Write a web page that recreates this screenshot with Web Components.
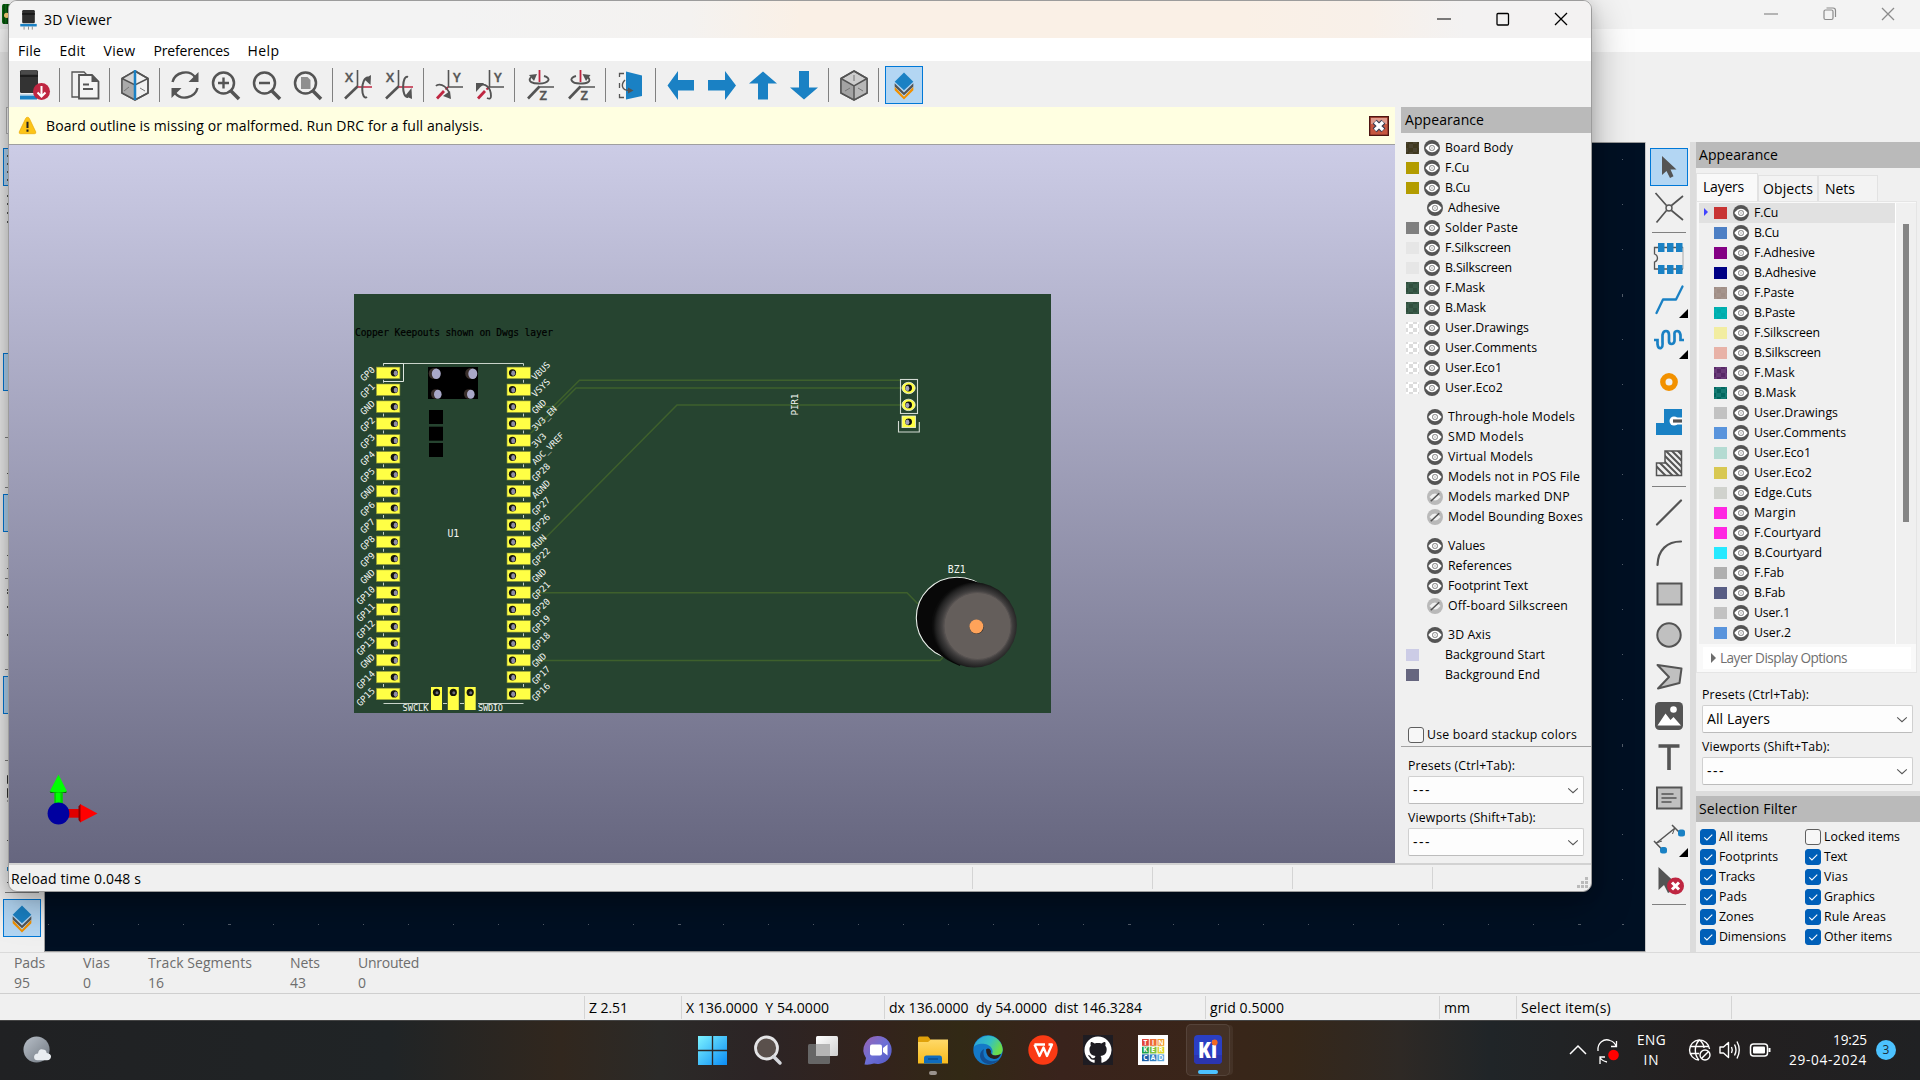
<!DOCTYPE html>
<html lang="en">
<head>
<meta charset="utf-8">
<title>3D Viewer</title>
<style>
html,body{margin:0;padding:0;width:1920px;height:1080px;overflow:hidden;background:#f0f0f0}
body{font-family:"Open Sans","Noto Sans",sans-serif;font-size:14px;color:#000;display:flex;flex-direction:column}
</style>
</head>
<body>
<desk-top></desk-top>
<script>
const G='#545454', B='#1a81c4', R='#bf2641';
const def=(tag,css,html,after)=>customElements.define(tag,class extends HTMLElement{
  connectedCallback(){
    if(this.shadowRoot)return;
    const r=this.attachShadow({mode:'open'});
    r.innerHTML='<style>*{box-sizing:border-box}'+css+'</style>'+html(this);
    if(after)after(this,r);
  }});
const a=(e,n,d='')=>e.getAttribute(n)??d;

/* Text run; w sets the advance width through letter spacing */
def('ui-text',':host{display:block;white-space:pre;flex:none;line-height:20px}span{display:inline-block}',
  ()=>'<span><slot></slot></span>',(e,r)=>{
  const w=+a(e,'w',0); if(!w)return;
  const s=r.querySelector('span'),n=e.textContent.length,cur=s.getBoundingClientRect().width;
  if(n>1&&cur)s.style.letterSpacing=((w-cur)/n).toFixed(3)+'px';
});

const cubeBody=(fill)=>`<path d="M15 1 28 8.500V23L15 30 2 23V8.500Z" fill="${fill}" stroke="${G}" stroke-width="1.500" stroke-linejoin="round"/>`;
const mag=`<circle cx="12.500" cy="13" r="10.500" fill="none" stroke="${G}" stroke-width="2.500"/><path d="M20 21 28 29" stroke="${G}" stroke-width="3.500"/>`;
const letter=(t,x,y)=>`<text x="${x}" y="${y}" font-size="13" font-weight="600" fill="${G}" stroke="${G}" stroke-width=".4" font-family="Open Sans,sans-serif">${t}</text>`;
const layersIc=`<path d="M5 17 15 27.500 25 17V20.500L15 30.500 5 20.500Z" fill="#f29100"/><path d="M5 13 15 23 25 13V16.500L15 26 5 16.500Z" fill="#545454"/><path d="M15 1.500 25 11.500 15 20.500 5 11.500Z" fill="${B}"/>`;
const I={
load:`<rect x="0" y="0" width="18" height="23" rx="1.500" fill="#333"/><path d="M0 5H18V7H0Z" fill="#1d1d1d"/><rect x="1" y="0" width="16" height="4.500" fill="#4a4a4a"/><rect x="0" y="24.500" width="17" height="2" fill="#8fbfe0"/><rect x="0" y="26" width="17" height="3.500" fill="${B}"/><circle cx="21.500" cy="21.500" r="8.500" fill="${R}"/><path d="M21.500 16V26M17.500 22.500 21.500 26.500 25.500 22.500" fill="none" stroke="#fff" stroke-width="2"/>`,
copy:`<path d="M9 27H2V2H14L17 5" fill="none" stroke="${G}" stroke-width="1.300"/><path d="M9 5H22L28.500 11.500V28.500H9Z" fill="#f4f4f4" stroke="${G}" stroke-width="1.800"/><path d="M21.500 5V12H28.500Z" fill="${G}"/><path d="M13 14.500H19M13 19H23" stroke="${G}" stroke-width="1.800"/>`,
raytrace:cubeBody('#f2f2f2')+`<path d="M2 8.500 15 15V30L2 23Z" fill="#aaa"/><path d="M15 1 2 8.500 15 15Z" fill="#d5d5d5"/><path d="M2 8.500 15 15 28 8.500M15 1 28 8.500V23L15 30 2 23V8.500Z" fill="none" stroke="${G}" stroke-width="1.500"/><path d="M15 0V30" stroke="${B}" stroke-width="2.500"/><path d="M4 21 9 17M20 18 25 21" stroke="#777" stroke-width="1"/>`,
refresh:`<path d="M2.500 12C5 2 19-1 25 7M27.500 18C25 28 11 31 5 23" fill="none" stroke="${G}" stroke-width="2.400"/><path d="M28.500 2V12H18.500ZM1.500 28V18H11.500Z" fill="${G}"/>`,
zin:mag+`<path d="M7 13H18M12.500 7.500V18.500" stroke="${G}" stroke-width="2.400"/>`,
zout:mag+`<path d="M7 13H18" stroke="${G}" stroke-width="2.400"/>`,
zfit:mag+`<path d="M8 7H14.500L17.500 10V19H8Z" fill="#8f8f8f"/>`,
x1:letter('X',2,12)+`<path d="M14.500 0V17" stroke="${G}" stroke-width="1.600"/><path d="M14 17H29" stroke="${R}" stroke-width="1.600"/><path d="M14.500 16.500 2 28.500" stroke="${G}" stroke-width="2.600"/><path d="M24 27C18 31 17 8 25 7.500" fill="none" stroke="${G}" stroke-width="2"/><path d="M21 9 28 5 27.500 15Z" fill="${G}"/>`,
x2:letter('X',2,12)+`<path d="M14.500 0V17" stroke="${G}" stroke-width="1.600"/><path d="M14 17H29" stroke="${R}" stroke-width="1.600"/><path d="M14.500 16.500 2 28.500" stroke="${G}" stroke-width="2.600"/><path d="M24 7C18 4 17 28 24 27" fill="none" stroke="${G}" stroke-width="2"/><path d="M21 26 28 29 27.500 18Z" fill="${G}"/>`,
y1:letter('Y',19,12)+`<path d="M14.500 0V17H29" fill="none" stroke="${G}" stroke-width="1.600"/><path d="M10 21 3 28.500" stroke="${R}" stroke-width="2.800"/><path d="M14 17 11.500 19.500" stroke="${R}" stroke-width="2"/><path d="M2 16C5 12 17 17 15 28" fill="none" stroke="${G}" stroke-width="1.800"/><path d="M9 26 17 29 16 21Z" fill="${G}"/>`,
y2:letter('Y',19,12)+`<path d="M14.500 0V17H29" fill="none" stroke="${G}" stroke-width="1.600"/><path d="M10 21 3 28.500" stroke="${R}" stroke-width="2.800"/><path d="M14 17 11.500 19.500" stroke="${R}" stroke-width="2"/><path d="M5 16C10 12 16 18 16 26Q16 30 12 28" fill="none" stroke="${G}" stroke-width="1.800"/><path d="M1 22 1 13 9 13Z" fill="${G}"/>`,
z1:letter('Z',14.500,29.500)+`<path d="M14.500 0V12" stroke="${R}" stroke-width="1.800"/><path d="M14 17H29" stroke="${G}" stroke-width="1.700"/><path d="M14.500 16.500 3 28.500" stroke="${G}" stroke-width="2.600"/><path d="M6 7C2 12 8 13.500 14 13.500 24 13.500 27 8 19 6" fill="none" stroke="${G}" stroke-width="1.900"/><path d="M4 5 12 4 9 11Z" fill="${G}"/>`,
z2:letter('Z',14.500,29.500)+`<path d="M14.500 0V12" stroke="${R}" stroke-width="1.800"/><path d="M14 17H29" stroke="${G}" stroke-width="1.700"/><path d="M14.500 16.500 3 28.500" stroke="${G}" stroke-width="2.600"/><path d="M10 6C2 8 5 13.500 14 13.500 21 13.500 26 12 22 7" fill="none" stroke="${G}" stroke-width="1.900"/><path d="M24.500 5 16.500 4 20 11Z" fill="${G}"/>`,
flip:`<path d="M10 1.500 26 5.500V26L10 29.500Z" fill="${B}"/><path d="M8 3.500H3.500V7M3.500 24V27.500H8M3.500 13V18" fill="none" stroke="${G}" stroke-width="1.300"/><path d="M9 10C5 14 5 20 13 20.500" fill="none" stroke="${G}" stroke-width="1.400"/><path d="M12 17.500 17.500 20.500 12 23.500Z" fill="${G}"/>`,
left:`<path d="M1.500 15.500 12 1V10H28V20.500H12V30Z" fill="${B}"/>`,
right:`<path d="M29 15.500 18 1V10H1V20.500H18V30Z" fill="${B}"/>`,
up:`<path d="M15 1.500 29 13.500H20V29.500H10V13.500H1Z" fill="${B}"/>`,
down:`<path d="M15 29.500 29 17.500H20V1H10V17.500H1Z" fill="${B}"/>`,
cube:cubeBody('#cdcdcd')+`<path d="M2 8.500 15 16V30L2 23Z" fill="#a3a3a3"/><path d="M15 16 28 8.500V23L15 30Z" fill="#b8b8b8"/><path d="M2 8.500 15 16 28 8.500M15 16V30M15 1 28 8.500V23L15 30 2 23V8.500Z" fill="none" stroke="${G}" stroke-width="1.500"/><path d="M15 5V11M6 21 11 18M19 18 24 21" stroke="#777" stroke-width="1"/>`,
layers:layersIc,
app3d:`<rect x="5" y="0" width="20" height="21" rx="2" fill="#2e2e2e"/><rect x="5" y="5" width="20" height="2.500" fill="#151515"/><rect x="2" y="22" width="26" height="4" fill="${B}"/><path d="M8 26V31M15 26V31M21 26V31" stroke="#888" stroke-width="1.500"/>`,
warn:`<path d="M15 2Q17 2 18 4L28 25Q29 28 26 28H4Q1 28 2 25L12 4Q13 2 15 2Z" fill="#fcc419" stroke="#e9a400" stroke-width="1"/><path d="M15 9V19M15 21.500V25" stroke="#222" stroke-width="3.200"/>`,
cursor:`<path d="M9 5V24L13.500 20 17 27 20.500 25.300 17.500 18.500H23.500Z" fill="${G}" transform="translate(-1 -1)"/>`,
ratsnest:`<path d="M1.500 0 12.500 12.500M29 3 17.500 12.500M2.500 29.500 12.500 17.500M29 27 17.500 17.500" stroke="${G}" stroke-width="1.700"/><circle cx="15" cy="15" r="3" fill="none" stroke="${G}" stroke-width="1.400"/>`,
fp:`<path d="M29 4.500H.5V11Q3.500 12 3.500 15T.5 19V26H29" fill="none" stroke="${G}" stroke-width="1.300"/><path d="M29 4V26" stroke="#aaa"/><path d="M4 0H10.500V9H4ZM13 0H19.500V9H13ZM22 0H28.500V9H22ZM4 22H10.500V31H4ZM13 22H19.500V31H13ZM22 22H28.500V31H22Z" fill="${B}"/>`,
track:`<path d="M2.500 28 9 14.500H22L28.500 1.500" fill="none" stroke="${B}" stroke-width="2.300" stroke-linejoin="round" stroke-linecap="round"/>`,
tune:`<path d="M0 14H3.500V18Q4 23 7 22 9 21 8.500 16V9Q9 5 12 5T15 9V15Q15 18 17.500 18T20.500 15V9Q20 5 23 5T26.500 9V14H30" fill="none" stroke="${B}" stroke-width="2.700"/>`,
via:`<circle cx="15" cy="15" r="6.200" fill="none" stroke="#f29100" stroke-width="5.400"/>`,
zone:`<path d="M10 2H28V28H2V16H10Z" fill="${B}"/><path d="M28 14H20" stroke="#fff" stroke-width="7"/><circle cx="20" cy="14" r="4.500" fill="#fff"/><path d="M19 14H28" stroke="${G}" stroke-width="3.200"/>`,
rule:`<defs><clipPath id="c"><path d="M11 3H27V27H3V15H11Z"/></clipPath></defs><g clip-path="url(#c)"><path d="M-2 14 14 30M3 12 20 29M6 9 26 29M9 6 30 27M11 2 30 21M17 2 30 15M23 2 30 9" stroke="${G}" stroke-width="2"/></g><path d="M11 3H27.500V27.500H2.500V15H11Z" fill="none" stroke="${G}" stroke-width="1.500"/>`,
line:`<path d="M3 27.500 27 3.500" stroke="${G}" stroke-width="2.200" stroke-linecap="round"/>`,
arc:`<path d="M3.500 27C4 12 13 3.500 27 3.500" fill="none" stroke="${G}" stroke-width="2.200" stroke-linecap="round"/>`,
rect:`<rect x="3.500" y="4.500" width="24" height="21" fill="#c0c0c0" stroke="${G}" stroke-width="2"/>`,
circ:`<circle cx="15" cy="15" r="11.700" fill="#c0c0c0" stroke="${G}" stroke-width="2"/>`,
poly:`<path d="M3.500 4 27.500 7.500 25.500 22 4 27.500 15 16Z" fill="#c0c0c0" stroke="${G}" stroke-width="2" stroke-linejoin="round"/>`,
image:`<rect x="1" y="1" width="28" height="28" rx="4.500" fill="${G}"/><circle cx="19.500" cy="8.500" r="3.300" fill="#fff"/><path d="M3.500 24.500 11.500 12.500 16.500 19 19.500 16 27 24.500Z" fill="#fff"/>`,
text:`<path d="M4.500 4H25.500M15 4V28" stroke="${G}" stroke-width="3.600"/>`,
tbox:`<rect x="3" y="4.500" width="24.500" height="21" fill="#c0c0c0" stroke="${G}" stroke-width="2"/><path d="M8 11H19M8 15H22M8 19H17" stroke="${G}" stroke-width="1.500" stroke-linecap="round"/>`,
dim:`<path d="M2.500 19 20.500 4.500M0 17 9 26.500M18 1 27 10" stroke="${G}" stroke-width="1.500"/><path d="M2.500 19 8 17M20.500 4.500 18.500 10" stroke="${G}"/><rect x="6" y="23" width="7" height="6.500" rx="2.500" fill="${B}"/><rect x="24" y="5.500" width="7" height="7" rx="2.500" fill="${B}"/>`,
del:`<path d="M4.500 1V24L10 19 14 27 18 25 14.500 17.500 20 15.500Z" fill="${G}"/><circle cx="21.500" cy="20" r="8.500" fill="${R}"/><path d="M18 16.500 25 23.500M25 16.500 18 23.500" stroke="#fff" stroke-width="3"/>`,
start:`<defs><linearGradient id="g" x1="0" y1="0" x2="1" y2="1"><stop offset="0" stop-color="#7df3ff"/><stop offset="1" stop-color="#0a8cf5"/></linearGradient></defs><path d="M0 0H14.300V14.300H0ZM15.700 0H30V14.300H15.700ZM0 15.700H14.300V30H0ZM15.700 15.700H30V30H15.700Z" fill="url(#g)"/>`,
search:`<circle cx="13.500" cy="13" r="11" fill="#5a504c" stroke="#e4e4e6" stroke-width="2.800"/><path d="M20.500 21.500 27 28" stroke="#d5d7dc" stroke-width="3.500" stroke-linecap="round"/>`,
tasks:`<defs><linearGradient id="g" x1="0" y1="0" x2="1" y2="1"><stop offset="0" stop-color="#fff"/><stop offset="1" stop-color="#cfcfcf"/></linearGradient></defs><rect x="8" y="1" width="22" height="20" rx="1.500" fill="url(#g)"/><rect x="0" y="9" width="22" height="20" rx="1.500" fill="#666"/><path d="M8 9H22V21H8Z" fill="#b5b5b5"/>`,
chat:`<defs><linearGradient id="g" x1="0" y1="0" x2="1" y2="1"><stop offset="0" stop-color="#9b62b0"/><stop offset=".5" stop-color="#6d6fd6"/><stop offset="1" stop-color="#5157c4"/></linearGradient></defs><path d="M15 1A14 14 0 1 1 11 28.500Q7 30 1.500 29.500L3 23A14 14 0 0 1 15 1Z" fill="url(#g)"/><rect x="7" y="9.500" width="12" height="11" rx="2" fill="#fff"/><path d="M20 13 24.500 9.500V20.500L20 17Z" fill="#fff"/>`,
folder:`<defs><linearGradient id="g" x1="0" y1="0" x2="0" y2="1"><stop offset="0" stop-color="#ffd969"/><stop offset="1" stop-color="#f8bb1c"/></linearGradient></defs><path d="M0 3Q0 1.500 1.500 1.500H10L13 5V9H0Z" fill="#e0a10a"/><path d="M0 7H10L13 4.500H30V28.500H0Z" fill="url(#g)"/><path d="M6 28.500V23Q6 20.500 8.500 20.500H22Q24 20.500 24 23V28.500Z" fill="#0f6cbd"/><path d="M10 24H20" stroke="#0a4d8c" stroke-width="1.500"/>`,
edge:`<defs><linearGradient id="g" x1="0" y1="0" x2="1" y2=".4"><stop offset="0" stop-color="#2a9fe0"/><stop offset=".6" stop-color="#35c1c1"/><stop offset="1" stop-color="#6bdc4a"/></linearGradient></defs><circle cx="15" cy="15" r="14.700" fill="#1479c8"/><path d="M.8 12A14.700 14.700 0 0 1 29.700 14C30 20 24 22 19 19.500 21 15 18 10 12 9 7 8 2 10 .8 12Z" fill="url(#g)"/><path d="M11 14C8 24 17 29 26 24.500 21 31.500 8 30.500 7 21 7 17 9 15 11 14Z" fill="#124f94"/><path d="M13 14.500Q16 12 18 16 17 18 19 19.500 22 21.500 28 19 26 24 21 24 13 23 13 14.500Z" fill="#2b1f1c"/>`,
wps:`<circle cx="15" cy="15" r="14.700" fill="#fa3a14"/><path d="M6.500 9.500H17M6.500 9.500 11.500 21 15.500 12.500 19 21 24 9.500H20.500" fill="none" stroke="#fff" stroke-width="2.300" stroke-linejoin="round"/>`,
github:`<rect x="0" y="0" width="30" height="30" fill="#1e1c22"/><g transform="translate(1.500 1.500) scale(1.690)"><path fill="#fff" d="M8 0C3.580 0 0 3.580 0 8c0 3.540 2.290 6.530 5.470 7.590.4.070.55-.17.55-.38 0-.19-.01-.82-.01-1.490-2.010.37-2.530-.49-2.690-.94-.09-.23-.48-.94-.82-1.130-.28-.15-.68-.52-.01-.53.63-.01 1.080.58 1.230.82.72 1.210 1.870.87 2.330.66.07-.52.28-.87.51-1.070-1.780-.2-3.640-.89-3.640-3.950 0-.87.31-1.590.82-2.150-.08-.2-.36-1.020.08-2.120 0 0 .67-.21 2.200.82.64-.18 1.320-.27 2-.27s1.360.09 2 .27c1.530-1.040 2.200-.82 2.200-.82.44 1.100.16 1.920.08 2.120.51.56.82 1.270.82 2.150 0 3.070-1.870 3.750-3.650 3.950.29.25.54.73.54 1.480 0 1.070-.01 1.930-.01 2.200 0 .21.150.46.550.38A8.010 8.010 0 0 0 16 8c0-4.420-3.580-8-8-8Z"/></g>`,
tinker:`<rect width="30" height="30" fill="#fff"/>`+[['T','#e2453b'],['I','#ee6c35'],['N','#f39a27'],['K','#1ea24b'],['E','#7dc242'],['R','#dcd32b'],['C','#1b5fa8'],['A','#2f7fc4'],['D','#5aa7dd']].map(([t,c],i)=>{const x=4+(i%3)*7.700,y=4+(i/3|0)*7.700;return `<rect x="${x}" y="${y}" width="6.800" height="6.800" fill="${c}"/><text x="${x+3.400}" y="${y+5.700}" font-size="6.500" font-weight="700" text-anchor="middle" fill="#fff" font-family="Open Sans">${t}</text>`}).join(''),
kicad:`<rect x="1" y="0" width="28" height="29" rx="4" fill="#2a3fc4"/><path d="M1 20H29V25Q29 29 25 29H5Q1 29 1 25Z" fill="#2b35b0"/><text x="14.500" y="23" font-size="23" font-weight="800" text-anchor="middle" textLength="19" lengthAdjust="spacingAndGlyphs" fill="#fff" font-family="Open Sans">Ki</text><circle cx="21.700" cy="7.500" r="2.900" fill="#f26822"/>`,
weather:`<defs><linearGradient id="g" x1="0" y1="0" x2="1" y2="1"><stop offset="0" stop-color="#b9c0c9"/><stop offset="1" stop-color="#6f7780"/></linearGradient></defs><circle cx="14" cy="14" r="13.500" fill="url(#g)"/><path d="M15 25Q11 25 11.500 21 12 18 15.500 18 16.500 13 20.500 14 24 14 24.500 17.500 29 18 29 21.500 28.500 25 25 25Z" fill="#e9edf1"/>`,
chev:`<path d="M7 19 15 11 23 19" fill="none" stroke="#fff" stroke-width="1.500"/>`,
sync:`<path d="M5 16C4 8 11 3 17 5.500 20 6.500 22 8 23 11M23.500 6V11.500H18M7 29V22H12M7 22.500Q9 26 14 27" fill="none" stroke="#fff" stroke-width="1.300"/><circle cx="20.500" cy="20" r="5.300" fill="#f00"/>`,
globe:`<g fill="none" stroke="#fff" stroke-width="1.400"><path d="M14 25A10 10 0 1 1 24.500 14M5.500 11.500H23.500M5.500 18.500H14M14 25C9 20 9 10 14.500 5 18 8 19 11 19 13"/><circle cx="20" cy="20" r="5"/><path d="M16.500 23.500 23.500 16.500"/></g>`,
vol:`<g fill="none" stroke="#fff" stroke-width="1.400"><path d="M5 12H8.500L13.500 7.500V22.500L8.500 18H5Z" stroke-linejoin="round"/><path d="M16.500 12Q18 15 16.500 18M19.500 9.500Q22.500 15 19.500 20.500M22 6.500Q26.500 15 22 23.500"/></g>`,
bat:`<rect x="5.500" y="9" width="17" height="12" rx="3" fill="none" stroke="#fff" stroke-width="1.500"/><rect x="8" y="11.500" width="12" height="7" fill="#fff" rx="1"/><path d="M24.500 13V17" stroke="#fff" stroke-width="2"/>`,
min:`<path d="M8 15H22" stroke="currentColor" stroke-width="1.200"/>`,
max:`<rect x="9" y="9.500" width="11.500" height="11.500" rx="1" fill="none" stroke="currentColor" stroke-width="1.300"/>`,
restore:`<rect x="9" y="11" width="9" height="9.500" rx="1.500" fill="none" stroke="currentColor" stroke-width="1.200"/><path d="M11.500 9H18Q20.500 9 20.500 11.500V18" fill="none" stroke="currentColor" stroke-width="1.200"/>`,
close:`<path d="M9 9 21 21M21 9 9 21" stroke="currentColor" stroke-width="1.300"/>`,
eye:`<circle cx="15" cy="15" r="15" fill="#545454"/><path d="M2.500 15Q8 7 15 7T27.500 15Q22 23 15 23T2.500 15Z" fill="#fff"/><rect x="10.600" y="10.600" width="8.800" height="8.800" rx="3" fill="#fff" stroke="#777" stroke-width="1.800"/><circle cx="15" cy="15" r="1.300" fill="#999"/>`,
eyeoff:`<circle cx="15" cy="15" r="15" fill="#b9b9b9"/><path d="M4.500 15Q10 8.500 15 8.500T25.500 15Q20 21.500 15 21.500T4.500 15Z" fill="#f0f0f0"/><path d="M7 23 23 8" stroke="#545454" stroke-width="3"/>`,
drop:`<path d="M6 12 15 20 24 12" fill="none" stroke="#555" stroke-width="2"/>`,
check:`<path d="M8 15.500 13 20.500 23 10.500" fill="none" stroke="#fff" stroke-width="2"/>`,
x95:`<rect x="1" y="1" width="28" height="28" fill="#c6563f" stroke="#4d1512" stroke-width="2"/><rect x="3" y="3" width="24" height="9" fill="#df9a8c"/><path d="M8.500 8.500 21.500 21.500M21.500 8.500 8.500 21.500" stroke="#333c52" stroke-width="8.500"/><path d="M9 9 21 21M21 9 9 21" stroke="#fff" stroke-width="5"/>`,
pcb:`<rect width="30" height="30" rx="3" fill="#0b6e13"/><path d="M3 0V30M8 0V30" stroke="#063f0a" stroke-width="2"/><circle cx="7" cy="17" r="4" fill="#ffd27a"/>`
};
def('ui-icon',':host{display:block;flex:none}svg{display:block;overflow:visible}',e=>{const s=a(e,'s','30');return `<svg width="${s}" height="${s}" viewBox="0 0 30 30">${I[a(e,'n')]}</svg>`});

/* Toolbar pieces */
def('tool-button',':host{display:flex;flex:none;align-items:center;justify-content:center;position:relative;width:41px;height:38px}:host([v]){width:38px;height:var(--h,41px)}.on{width:38px;height:38px;background:#b3d6f3;border:1px solid #0078d7;display:flex;align-items:center;justify-content:center}.tri{position:absolute;right:0;bottom:2px;border-left:9px solid transparent;border-bottom:9px solid #000}',
 e=>{const ic=`<ui-icon n="${a(e,'n')}" s="${a(e,'s','30')}"></ui-icon>`;return (e.hasAttribute('on')?`<div class="on">${ic}</div>`:ic)+(e.hasAttribute('tri')?'<i class="tri"></i>':'')});
def('tool-sep',':host{display:block;flex:none;width:9px;height:34px;padding-left:4px}:host([v]){width:34px;height:8px;padding:3px 0 0}i{display:block;width:1px;height:34px;background:#808080}:host([v]) i{width:34px;height:1px}',()=>'<i></i>');

/* Form pieces */
def('panel-header',':host{display:flex;align-items:center;height:26px;flex:none;background:#bababa;padding:0 0 1px var(--pl,4px);font-size:14px}',e=>`<ui-text w="${a(e,'w')}">${e.textContent}</ui-text>`);
def('combo-box',':host{display:flex;flex:none;align-items:center;justify-content:space-between;height:28px;background:#fdfdfd;border:1px solid #d0d0d0;border-bottom-color:#bcbcbc;border-radius:2px;padding:0 2px 0 4px;font-size:14px}',()=>'<slot></slot><ui-icon n="drop" s="16"></ui-icon>');
def('check-box',':host{display:flex;align-items:center;height:20px;gap:3px;font-size:12.300px}i{display:block;width:16px;height:16px;border-radius:3px;border:1px solid #5f5f5f;background:#f7f7f7;flex:none}:host([c]) i{background:#005fb8;border-color:#005fb8}ui-icon{margin:-1px}',
 e=>`<i>${e.hasAttribute('c')?'<ui-icon n="check" s="16"></ui-icon>':''}</i><ui-text w="${a(e,'w')}">${e.textContent}</ui-text>`);
def('layer-row',':host{display:flex;align-items:center;height:20px;flex:none;padding-left:5px;font-size:12.300px}:host([sel]){background:#e1e1e1}.sw{width:13px;height:12px;flex:none;margin-right:var(--sg,5px)}ui-icon,.no{width:16px;flex:none}ui-text{margin-left:5px}.ind{width:3px}.ar{width:var(--ar,0px);height:8px;position:relative}:host([sel]) .ar::before{content:"";position:absolute;left:0;top:-1px;border-left:4px solid #4143ff;border-top:4px solid transparent;border-bottom:4px solid transparent}',
 e=>{const c=a(e,'c'),c2=a(e,'c2'),eye=a(e,'eye','eye');
 const bg=c2?`background:conic-gradient(${c} 25%,${c2} 0 50%,${c} 0 75%,${c2} 0) -2px -2px/9px 8px`:`background:${c||'transparent'}`;
 return `<i class="ar"></i><i class="sw" style="${bg}"></i>${c?'':'<i class="ind"></i>'}${eye=='none'?'<i class="no"></i>':`<ui-icon n="${eye}" s="16"></ui-icon>`}<ui-text w="${a(e,'w')}">${e.textContent}</ui-text>`});
const row=(t,w,c,c2,eye,x='')=>`<layer-row w="${w}" ${c?`c="${c}"`:''} ${c2?`c2="${c2}"`:''} ${eye?`eye="${eye}"`:''} ${x}>${t}</layer-row>`;

/* Rendered board */
const P=16.9, padY=i=>372.8+i*P;
const LL=['GP0','GP1','GND','GP2','GP3','GP4','GP5','GND','GP6','GP7','GP8','GP9','GND','GP10','GP11','GP12','GP13','GND','GP14','GP15'];
const RL=['VBUS','VSYS','GND','3V3_EN','3V3','ADC_VREF','GP28','AGND','GP27','GP26','RUN','GP22','GND','GP21','GP20','GP19','GP18','GND','GP17','GP16'];
const mono='font-family="DejaVu Sans Mono" fill="#f2f5f0"';
const hole=(x,y,d)=>`<circle cx="${x}" cy="${y}" r="3.600" fill="#15140c"/><ellipse cx="${x+d}" cy="${y+.4}" rx="2" ry="2.700" fill="#8f8da6"/>`;
def('board-view',':host{display:block;flex:1;min-height:0;background:linear-gradient(#cccce6,#66667f)}svg{display:block}',()=>{
 let s='';
 s+='<rect x="354" y="294" width="697" height="419" fill="#264430"/>';
 s+='<g fill="none" stroke="#3e602c" stroke-width="1.500"><path d="M530 406.700H553L579.500 380.300H900M530 434 576 388H905M530 553.500 677 405H905M530 592.700H907L918 604M530 660.400H940L948 652"/></g>';
 s+='<g fill="none" stroke="#c9d3c9" stroke-width="1"><path d="M383.500 366V363.500H523.500V366M383.500 372V690M523.500 372V690M383.500 703.500H429M443 703.500H447M460 703.500H464M478 703.500H523.500"/></g>';
 for(let i=0;i<20;i++){const y=padY(i);
  s+=`<rect x="374.500" y="${y-7}" width="28" height="14" fill="#264430"/><rect x="505" y="${y-7}" width="27" height="14" fill="#264430"/>`;
 }
 s+='<path d="M383.500 363.500H403.500V381.500H383.500" fill="none" stroke="#dfe6df"/>';
 for(let i=0;i<20;i++){const y=padY(i);
  s+=`<rect x="376.400" y="${y-5.700}" width="23.500" height="11.500" fill="#ffff45" stroke="#8c9436" stroke-width=".6"/><rect x="507" y="${y-5.700}" width="23.500" height="11.500" fill="#ffff45" stroke="#8c9436" stroke-width=".6"/>`+hole(394.3,y,1.4)+hole(512.5,y,.7);
  s+=`<text transform="translate(375.500 ${y-2.500}) rotate(-45)" text-anchor="end" font-size="9" ${mono}>${LL[i]}</text>`;
  s+=`<text transform="translate(535.500 ${y+8}) rotate(-45)" font-size="${RL[i].length>5?8.600:9}" ${mono}>${RL[i]}</text>`;
 }
 s+='<rect x="428" y="367" width="50" height="32" fill="#000"/>';
 [[435,373.5,5.5],[471.500,373.5,5.5],[436.500,394,4.800],[469.500,394,4.800]].forEach(([x,y,r])=>s+=`<circle cx="${x-.800}" cy="${y}" r="${r}" fill="#3a2f2b"/><ellipse cx="${x+1.300}" cy="${y+.3}" rx="${r-1}" ry="${r-.3}" fill="#a9a8c8"/>`);
 [410,426.7,443].forEach(y=>s+=`<rect x="429" y="${y}" width="14" height="14" fill="#000"/>`);
 [431,447.800,464.700].forEach(x=>s+=`<rect x="${x}" y="687" width="11" height="23" fill="#ffff45"/><circle cx="${x+5.5}" cy="692.400" r="3.600" fill="#15140c"/><circle cx="${x+6}" cy="692.800" r="1.500" fill="#6b6b7a"/>`);
 s+=`<text x="355" y="335.500" font-size="9.600" font-family="DejaVu Sans Mono" textLength="198" fill="#000" stroke="#000" stroke-width=".15">Copper Keepouts shown on Dwgs layer</text>`;
 s+=`<text x="453.300" y="536.500" font-size="9.800" text-anchor="middle" ${mono}>U1</text><text x="402.500" y="711" font-size="8.600" textLength="26" ${mono}>SWCLK</text><text x="478" y="711" font-size="8.600" textLength="25" ${mono}>SWDIO</text>`;
 s+=`<text transform="translate(798 415.500) rotate(-90)" font-size="9.500" textLength="22" ${mono}>PIR1</text><text x="956.700" y="572.500" font-size="9.800" text-anchor="middle" ${mono}>BZ1</text>`;
 s+='<g fill="none" stroke="#d3dbd3" stroke-width="1.100"><rect x="900.500" y="379.500" width="17" height="34"/><path d="M898.500 421V432H919.300V422"/></g>';
 [388,404.9].forEach(y=>s+=`<ellipse cx="908.600" cy="${y}" rx="6.600" ry="5.700" fill="#ffff45" stroke="#eef0dc" stroke-width=".8"/>`);
 s+='<rect x="902" y="416" width="13.500" height="11.600" fill="#ffff45" stroke="#eef0dc" stroke-width=".8"/>';
 [388,404.9,421.8].forEach(y=>s+=`<circle cx="908.600" cy="${y}" r="3.400" fill="#0d0d10"/><ellipse cx="907.400" cy="${y+.4}" rx="2" ry="2.600" fill="#a3a2ba"/>`);
 s+=`<defs><radialGradient id="cap" cx="977" cy="626" r="44" gradientUnits="userSpaceOnUse"><stop offset=".72" stop-color="#5d5856"/><stop offset=".82" stop-color="#3d3b3b"/><stop offset=".93" stop-color="#222"/><stop offset="1" stop-color="#0c0c0c"/></radialGradient></defs>
 <circle cx="957" cy="618" r="40.700" fill="#080808" stroke="#e9eee9" stroke-width="1.100"/><path d="M957 578Q965 578 980 583L960 666Q945 660 938 653Z" fill="#080808"/><circle cx="974.300" cy="625" r="42.600" fill="url(#cap)"/><circle cx="977.500" cy="626" r="33.500" fill="#645e5b" stroke="#565150" stroke-width="1"/><circle cx="976.700" cy="627" r="7" fill="#35302e"/><circle cx="976.400" cy="626.500" r="6.900" fill="#ffa35a"/>`;
 s+='<rect x="54.300" y="790" width="8.500" height="15" fill="#00d000"/><rect x="56" y="790" width="4.500" height="15" fill="#0f0"/><path d="M58.500 774.500 67 791.500Q58.500 794 49.700 791.500Z" fill="#0f0"/><path d="M49.700 791.500Q58.500 794 67 791.500L66 793H50.500Z" fill="#086b08"/><rect x="68" y="809" width="13" height="8.700" fill="#e00000"/><path d="M97.500 813.500 80 804V822.500Z" fill="#f00"/><path d="M80.500 804V822.500L78.500 820V806.500Z" fill="#8c0000"/><circle cx="58.500" cy="813.500" r="10.900" fill="#0000a0"/>';
 return `<svg width="1386" height="717" viewBox="9 145 1386 717">${s}</svg>`});

/* 3D viewer window */
def('viewer-window',`:host{display:flex;flex-direction:column;position:absolute;left:8px;top:0;width:1584px;height:892px;border:1px solid #9c9c9c;border-radius:9px;overflow:hidden;background:#f0f0f0;box-shadow:0 12px 38px rgba(0,0,0,.34),0 2px 14px rgba(0,0,0,.12)}
.title{height:37px;flex:none;display:flex;align-items:center;background:linear-gradient(90deg,#f3f3f3 28%,#f4f2f0 43%,#faf0e6 50%,#faf0e6 78%,#f8f0e9 86%,#f3f2f2 92%);padding:0 15px 1px 10px}
.title ui-text{margin:1px auto 0 6px;font-size:14px}.title .w{margin-left:28.500px}
.menu{height:23px;flex:none;background:#fff;display:flex;align-items:center;padding:2px 0 0 9px}
.tools{height:46px;flex:none;display:flex;align-items:center;padding:2px 0 0 5px}
.body{flex:1;display:flex;min-height:0}
.left{width:1386px;display:flex;flex-direction:column}
.info{height:38px;flex:none;background:#ffffe1;border-bottom:1px solid #9f9f9f;display:flex;align-items:center;padding:0 6px 0 9px}
.info ui-text{margin:0 auto 0 9px}
.side{margin-left:6px;flex:1;display:flex;flex-direction:column;min-height:0}
.list{display:flex;flex-direction:column;padding-top:5px}
.gap{height:9px}
.cb{padding:0 0 0 7px;margin-top:40px;height:20px;flex:none}
hr{border:0;height:1px;background:#a3a3a3;margin:1px 0 9px;flex:none}
.f{padding:0 7px;display:flex;flex-direction:column;font-size:12.300px}
.f combo-box{margin-bottom:4px}
.status{height:28px;flex:none;border-top:2px solid #d2d2d2;display:flex;align-items:stretch}
.status div{border-right:1px solid #d4d4d4;margin:2px 0;padding:2px 0 0 2px}
.grip{margin:auto 2px 3px auto;width:12px;height:11px;background:radial-gradient(#bbb 0 0) 8px 0/3px 3px no-repeat,radial-gradient(#bbb 0 0) 8px 4px/3px 3px no-repeat,radial-gradient(#bbb 0 0) 4px 4px/3px 3px no-repeat,radial-gradient(#bbb 0 0) 8px 8px/3px 3px no-repeat,radial-gradient(#bbb 0 0) 4px 8px/3px 3px no-repeat,radial-gradient(#bbb 0 0) 0 8px/3px 3px no-repeat}`,()=>`
<div class="title"><ui-icon n="app3d" s="19"></ui-icon><ui-text w="68">3D Viewer</ui-text><ui-icon class="w" n="min"></ui-icon><ui-icon class="w" n="max"></ui-icon><ui-icon class="w" n="close"></ui-icon></div>
<div class="menu"><ui-text w="23" style="margin-right:18.500px">File</ui-text><ui-text w="26" style="margin-right:18px">Edit</ui-text><ui-text w="32" style="margin-right:18px">View</ui-text><ui-text w="76" style="margin-right:18px">Preferences</ui-text><ui-text w="32">Help</ui-text></div>
<div class="tools">${'load|copy|raytrace|refresh zin zout zfit|x1 x2|y1 y2|z1 z2|flip|left right up down|cube'.split('|').map(g=>g.split(' ').map(n=>`<tool-button n="${n}"></tool-button>`).join('')).join('<tool-sep></tool-sep>')}<tool-sep></tool-sep><tool-button n="layers" on s="28"></tool-button></div>
<div class="body"><div class="left"><div class="info"><ui-icon n="warn" s="19"></ui-icon><ui-text w="437">Board outline is missing or malformed. Run DRC for a full analysis.</ui-text><ui-icon n="x95" s="20"></ui-icon></div><board-view></board-view></div>
<div class="side"><panel-header w="79">Appearance</panel-header><div class="list">
${row('Board Body',68,'#40391f','#4a4330')+row('F.Cu',24,'#b39c00')+row('B.Cu',25,'#b39c00')+row('Adhesive',52)+row('Solder Paste',73,'#808080')+row('F.Silkscreen',66,'#e6e6e6')+row('B.Silkscreen',67,'#e6e6e6')+row('F.Mask',40,'#385a48','#304e3d')+row('B.Mask',41,'#385a48','#304e3d')+row('User.Drawings',84,'#fff','#dcdcdc')+row('User.Comments',92,'#fff','#dcdcdc')+row('User.Eco1',57,'#fff','#dcdcdc')+row('User.Eco2',58,'#fff','#dcdcdc')}
<i class="gap"></i>${row('Through-hole Models',127)+row('SMD Models',76)+row('Virtual Models',85)+row('Models not in POS File',132)+row('Models marked DNP',122,'','','eyeoff')+row('Model Bounding Boxes',135,'','','eyeoff')}
<i class="gap"></i>${row('Values',37)+row('References',64)+row('Footprint Text',80)+row('Off-board Silkscreen',120,'','','eyeoff')}
<i class="gap"></i>${row('3D Axis',43)+row('Background Start',100,'#cccce6','','none')+row('Background End',95,'#66667f','','none')}</div>
<check-box class="cb" w="150">Use board stackup colors</check-box><hr>
<div class="f"><ui-text w="107">Presets (Ctrl+Tab):</ui-text><combo-box><ui-text w="18">---</ui-text></combo-box><ui-text w="128">Viewports (Shift+Tab):</ui-text><combo-box><ui-text w="18">---</ui-text></combo-box></div></div></div>
<div class="status"><div style="width:964px"><ui-text w="130">Reload time 0.048 s</ui-text></div><div style="width:180px"></div><div style="width:140px"></div><div style="width:140px"></div><i class="grip"></i></div>`);

/* Taskbar */
def('task-bar',`:host{display:flex;flex:none;height:60px;align-items:center;position:relative;color:#fff;padding-bottom:1px;border-top:1px solid #444;background:linear-gradient(90deg,#202123 0,#202426 390px,#31271e 560px,#2b2a28 660px,#2c2425 760px,#33231c 880px,#322915 960px,#39231c 1060px,#3a2519 1200px,#362719 1290px,#2e2925 1400px,#202528 1490px,#231f1f 1700px,#202123)}
.apps{display:flex;margin-left:634.500px;gap:3.100px}.app{width:52px;height:52px;display:flex;align-items:center;justify-content:center;position:relative}.apps .app.k{background:rgba(255,255,255,.06);border:1px solid rgba(255,255,255,.09);border-radius:5px;width:44px;margin:0 4px;box-shadow:4px 0 0 -1px rgba(255,255,255,.06)}
.app i{position:absolute;bottom:1px;height:4px;width:8px;border-radius:2px;background:#9a928c}.k i{width:20px;background:#4cc2ff}
.tray{margin-left:auto;display:flex;align-items:center;margin-right:24px;font-size:13.600px}
.c{display:flex;flex-direction:column;align-items:center;margin:0 17px 0 12.500px;width:32px}.r{display:flex;flex-direction:column;align-items:flex-end;margin:0 9px 0 14.500px}
.b{width:20px;height:20px;border-radius:50%;background:#4cc2ff;color:#1a2a36;text-align:center;font-size:12px}`,()=>`
<ui-icon n="weather" s="29" style="margin-left:23px"></ui-icon><div class="apps">${['start','search','tasks','chat','folder','edge','wps','github','tinker','kicad'].map(n=>`<div class="app ${n=='kicad'?'k':''}"><ui-icon n="${n}" s="${n=='start'?29:30}"></ui-icon>${n=='kicad'||n=='folder'?'<i></i>':''}</div>`).join('')}</div>
<div class="tray"><ui-icon n="chev"></ui-icon><ui-icon n="sync"></ui-icon><div class="c"><ui-text w="29">ENG</ui-text><ui-text w="16">IN</ui-text></div><ui-icon n="globe"></ui-icon><ui-icon n="vol"></ui-icon><ui-icon n="bat"></ui-icon><div class="r"><ui-text w="34">19:25</ui-text><ui-text w="78">29-04-2024</ui-text></div><div class="b"><ui-text>3</ui-text></div></div>`);

/* PCB editor window behind the viewer */
def('editor-window',`:host{display:flex;flex-direction:column;height:1020px;flex:none;background:#f0f0f0}
.title{height:29px;flex:none;background:#f3f3f3;display:flex;align-items:center;justify-content:flex-end;color:#8b8b8b;padding:0 17px 1px 6px}.title ui-icon{margin-left:28.500px}.title .p{margin:0 auto 0 -4px}
.menu{height:23px;flex:none;background:#fdfdfd}.top{height:90px;flex:none;padding:55px 0 0 6px}.top i{display:block;width:160px;height:27px;background:#fdfdfd;border:1px solid #b5b5b5}
.body{height:810px;flex:none;display:flex}
.lt{width:45px;border-right:1px solid #a0a0a0;display:flex;flex-direction:column;align-items:flex-start;padding-left:3px;flex:none;position:relative}
.lt b{display:block;width:38px;height:38px;background:#b3d6f3;border:1px solid #0078d7;flex:none}
.lt svg{position:absolute;left:0;top:0}
.cv{flex:1;min-width:0;background:#001023;border-top:1px solid #9a9a9a;border-bottom:1px solid #9a9a9a}.cv svg{display:block}
.rt{width:45px;display:flex;flex-direction:column;align-items:center;border-left:1px solid #c8c8c8;flex:none;padding:5px 0 0 1px}
.sash{width:6px;background:#dcdcdc;flex:none}
.panel{width:224px;display:flex;flex-direction:column;flex:none;--pl:3px}
.tabs{display:flex;align-items:flex-end;height:33px;flex:none}
.tab{height:26px;border:1px solid #e2e2e2;border-bottom:0;background:#f3f3f3;padding:3px 0 0 4px;width:60px}.tab.s{height:28px;width:62px;background:#f9f9f9;padding-left:6px}
.page{width:221px;height:472px;flex:none;background:#f9f9f9;border:1px solid #e5e5e5;padding:1px 0 0 2px;--ar:10px;--sg:6px}
.ls{display:flex;height:441px;background:#f0f0f0}.ls .l{width:197px;border-right:1px solid #fff}
.th{width:6px;height:298px;background:#858585;margin:21px 0 0 7px}
.opt{background:#fff;height:22px;margin:3px 5px 0 4px;display:flex;align-items:center;color:#6f6f6f;padding-left:8px;font-size:13.600px;gap:4px}
.opt i{border-left:5px solid #6d6d6d;border-top:5px solid transparent;border-bottom:5px solid transparent}
.f{padding:12px 7px 0 6px;display:flex;flex-direction:column;font-size:12.300px}.f combo-box{margin-bottom:4px}
.sh{height:5px;background:#dcdcdc;margin-top:2px;flex:none}
.cols{display:flex;padding:5px 0 0 4px}.cols>div{width:105px}
.msg{height:41px;flex:none;display:flex;color:#6d6d6d;padding:0 0 0 14px;border-top:1px solid #dadada}.msg>div{flex:none}
.status{height:28px;flex:none;border-top:1px solid #cfcfcf;display:flex}
.status div{border-right:1px solid #d4d4d4;margin:2px 0 2px;padding:2px 0 0 4px}.status div:last-child{border:0}`,()=>{
 const tb=(n,h,x='')=>`<tool-button v n="${n}" style="--h:${h}px" ${x}></tool-button>`;
 let dots='';
 for(let i=0;i<36;i++)dots+=`<rect x="${48+i*45}" y="924" width="${i%10==4?3:1}" height="1" fill="#525c69"/>`;
 for(let j=0;j<18;j++)dots+=`<rect x="1622" y="${159+j*45}" width="1" height="${j%10==3?3:1}" fill="#525c69"/>`;
 /* left toolbar: separators and the outer edges of its glyphs */
 let lt='<path d="M5 437.500H39M5 487.500H39M5 578.500H39M5 669.500H39M5 760.500H39" stroke="#808080"/>';
 [155,163,171,179,195,203,212,221].forEach(y=>lt+=`<rect x="7" y="${y}" width="3" height="2" fill="#545454"/>`);
 lt+='<path d="M8.500 236V262M7 473.500H10M7 555.500H10M7 568.500H10M7 801H10M7 840.500H10M7 882.500H10" stroke="#545454"/><path d="M7 590H10M7 593H10M7 607H10M7 635H10" stroke="#545454" stroke-width="2"/><path d="M10 775.500H7.500V783.500H10M10 788.500H7.500V797.500H10" fill="none" stroke="#333"/><rect x="7" y="867" width="3" height="4" fill="#1a81c4"/>';
 return `<div class="title"><ui-icon class="p" n="pcb" s="20"></ui-icon><ui-icon n="min"></ui-icon><ui-icon n="restore"></ui-icon><ui-icon n="close"></ui-icon></div><div class="menu"></div><div class="top"><i></i></div>
<div class="body"><div class="lt"><b style="margin-top:6px"></b><b style="margin-top:167px"></b><b style="margin-top:103px"></b><b style="margin-top:144px"></b><tool-sep v style="margin-top:175px;margin-left:2px"></tool-sep><tool-button v n="layers" s="28" on style="--h:38px;margin-top:2px"></tool-button><svg width="44" height="750" viewBox="0 142 44 750">${lt}</svg></div>
<div class="cv"><svg width="1600" height="807" viewBox="45 143 1600 807">${dots}</svg></div>
<div class="rt">${tb('cursor',39,'on')}${tb('ratsnest',43)}<tool-sep v></tool-sep>${tb('fp',42)}${tb('track',41,'tri')}${tb('tune',41,'tri')}${tb('via',41)}${tb('zone',40)}${tb('rule',41)}<tool-sep v style="height:9px"></tool-sep>${['line','arc','rect','circ','poly','image','text','tbox'].map(n=>tb(n,40.8)).join('')}${tb('dim',41,'tri')}${tb('del',43)}<tool-sep v style="padding-top:2px"></tool-sep></div>
<i class="sash"></i>
<div class="panel"><panel-header w="79">Appearance</panel-header>
<div class="tabs"><div class="tab s"><ui-text w="41">Layers</ui-text></div><div class="tab"><ui-text w="50">Objects</ui-text></div><div class="tab" style="padding-left:6px"><ui-text w="30">Nets</ui-text></div></div>
<div class="page"><div class="ls"><div class="l">${[['F.Cu',24,'#c83434'],['B.Cu',25,'#4d7fc4'],['F.Adhesive',61,'#840084'],['B.Adhesive',62,'#000084'],['F.Paste',40,'#a5948c','#a08e86'],['B.Paste',41,'#00b3b3','#00abab'],['F.Silkscreen',66,'#f2eda1'],['B.Silkscreen',67,'#e8b2a7'],['F.Mask',41,'#693a78','#582867'],['B.Mask',42,'#147a72','#02675f'],['User.Drawings',84,'#c2c2c2'],['User.Comments',92,'#5994dc'],['User.Eco1',57,'#b4dbd2'],['User.Eco2',58,'#d8c852'],['Edge.Cuts',58,'#d0d2cd'],['Margin',42,'#ff26e2'],['F.Courtyard',67,'#ff26e2'],['B.Courtyard',68,'#26e9ff'],['F.Fab',30,'#afafaf'],['B.Fab',31,'#585d84'],['User.1',36,'#c2c2c2'],['User.2',37,'#5994dc']].map((r,i)=>row(r[0],r[1],r[2],r[3],'',i?'':'sel')).join('')}</div><i class="th"></i></div>
<div class="opt"><i></i><ui-text w="127">Layer Display Options</ui-text></div></div>
<div class="f"><ui-text w="107">Presets (Ctrl+Tab):</ui-text><combo-box><ui-text w="63">All Layers</ui-text></combo-box><ui-text w="128">Viewports (Shift+Tab):</ui-text><combo-box><ui-text w="18">---</ui-text></combo-box></div>
<i class="sh"></i><panel-header w="98">Selection Filter</panel-header>
<div class="cols"><div><check-box c w="49">All items</check-box><check-box c w="59">Footprints</check-box><check-box c w="36">Tracks</check-box><check-box c w="28">Pads</check-box><check-box c w="35">Zones</check-box><check-box c w="67">Dimensions</check-box></div><div><check-box w="76">Locked items</check-box><check-box c w="23">Text</check-box><check-box c w="24">Vias</check-box><check-box c w="51">Graphics</check-box><check-box c w="62">Rule Areas</check-box><check-box c w="68">Other items</check-box></div></div></div></div>
<div class="msg"><div style="width:69px"><ui-text w="31">Pads</ui-text><ui-text w="16">95</ui-text></div><div style="width:65px"><ui-text w="27">Vias</ui-text><ui-text w="8">0</ui-text></div><div style="width:142px"><ui-text w="104">Track Segments</ui-text><ui-text w="16">16</ui-text></div><div style="width:68px"><ui-text w="30">Nets</ui-text><ui-text w="16">43</ui-text></div><div><ui-text w="61">Unrouted</ui-text><ui-text w="8">0</ui-text></div></div>
<div class="status">${[[585,''],[97,'Z 2.51',39],[203,'X 136.0000  Y 54.0000',143],[321,'dx 136.0000  dy 54.0000  dist 146.3284',253],[234,'grid 0.5000',74],[77,'mm',26],[215,'Select item(s)',90],[188,'']].map(([w,t,tw])=>`<div style="width:${w}px">${t?`<ui-text w="${tw}">${t}</ui-text>`:''}</div>`).join('')}</div>`});

def('desk-top',':host{display:flex;flex-direction:column;width:1920px;height:1080px;position:relative;overflow:hidden}',()=>'<editor-window></editor-window><viewer-window></viewer-window><task-bar></task-bar>');
</script>
</body>
</html>
